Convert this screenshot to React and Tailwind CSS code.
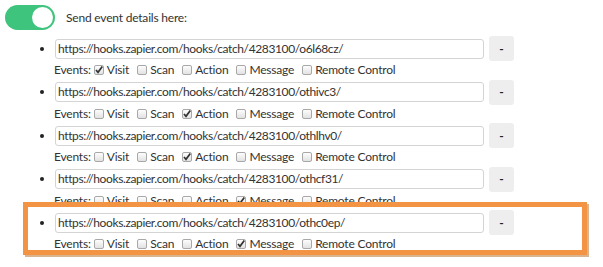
import React from "react";

const rows = [
  { url: "https://hooks.zapier.com/hooks/catch/4283100/o6l68cz/", checked: "Visit" },
  { url: "https://hooks.zapier.com/hooks/catch/4283100/othivc3/", checked: "Action" },
  { url: "https://hooks.zapier.com/hooks/catch/4283100/othlhv0/", checked: "Action" },
  { url: "https://hooks.zapier.com/hooks/catch/4283100/othcf31/", checked: "Message" },
  { url: "https://hooks.zapier.com/hooks/catch/4283100/othc0ep/", checked: "Message" },
];

const events = ["Visit", "Scan", "Action", "Message", "Remote Control"];

function Box({ checked }) {
  return (
    <span className="relative inline-block w-[10px] h-[10px] rounded-[2px] border border-[#a8a8a8] bg-gradient-to-b from-[#fdfdfd] to-[#e2e2e2] shrink-0">
      {checked && (
        <svg viewBox="0 0 10 10" className="absolute left-[-1px] top-[-1px] w-[10px] h-[10px]">
          <path d="M2 5 L4 7.3 L8.3 1.6" fill="none" stroke="#333" strokeWidth="1.7" />
        </svg>
      )}
    </span>
  );
}

function Row({ url, checked }) {
  return (
    <div className="flex flex-col">
      <div className="flex items-center h-[25px]">
        <div className="w-[50px] flex justify-end pr-[6px]">
          <span className="w-[4px] h-[4px] rounded-full bg-[#222]" />
        </div>
        <div className="ml-[5px] w-[429px] h-[20px] border border-[#d4d4d4] rounded-[3px] flex items-center pl-[2px] text-[12px] tracking-[-0.38px] text-[#333] whitespace-nowrap">
          {url}
        </div>
        <div className="ml-[5px] w-[25px] h-[25px] rounded-[3px] bg-[#eeeeee] flex items-center justify-center text-[#222] text-[12px] font-bold leading-none">
          -
        </div>
      </div>
      <div className="flex items-center h-[18.5px] pl-[54px] text-[12px] tracking-[-0.2px] whitespace-nowrap">
        <span>Events:</span>
        {events.map((e, i) => (
          <span key={e} className={`flex items-center ${i === 0 ? "ml-[3px]" : "ml-[8px]"}`}>
            <Box checked={e === checked} />
            <span className="ml-[3px]">{e}</span>
          </span>
        ))}
      </div>
    </div>
  );
}

export default function App() {
  return (
    <div className="relative w-[603px] h-[267px] bg-white text-[#333] overflow-hidden" style={{ fontFamily: "Lato, 'Open Sans', sans-serif" }}>
      <div className="flex items-center pt-[5px] pl-[5px] h-[30px]">
        <div className="w-[50px] h-[25px] rounded-full bg-[#3ec47c] flex items-center justify-end pr-[2px]">
          <span className="w-[21px] h-[21px] rounded-full bg-white" />
        </div>
        <span className="ml-[11px] text-[12px] tracking-[-0.2px]">Send event details here:</span>
      </div>
      <div className="mt-[6px] flex flex-col">
        {rows.map((r) => (
          <Row key={r.url} {...r} />
        ))}
      </div>
      <div className="absolute left-[23px] top-[202px] w-[564px] h-[53px] border-[5px] border-[#f39344] shadow-[2px_2px_0_#d9b48e] pointer-events-none" />
    </div>
  );
}
